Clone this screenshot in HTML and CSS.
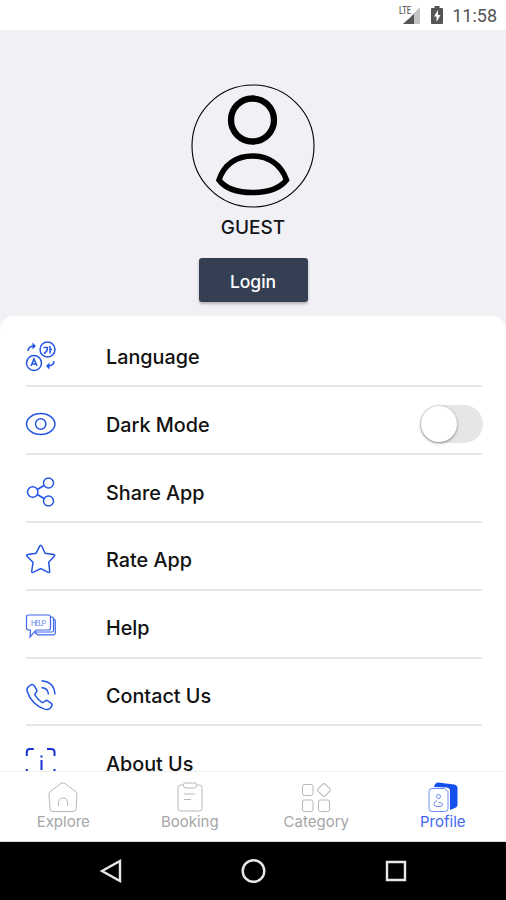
FILE: index.html
```html
<!DOCTYPE html>
<html lang="en">
  <head>
    <meta charset="UTF-8" />
    <meta name="viewport" content="width=device-width, initial-scale=1.0" />
    <title>Profile</title>
    <link rel="stylesheet" href="styles.css">
  </head>
  <body>
    <div class="status-bar">
      <svg class="signal" width="23" height="20" viewBox="0 0 23 20">
        <text x="1" y="8.500" class="lte" textLength="12" lengthAdjust="spacingAndGlyphs">LTE</text>
        <path d="M22 2v17H5l5-5h3v-3z" fill="#c3c3c3" />
        <path d="M16 9v10H5z" fill="#555" />
      </svg>
      <svg class="battery" width="12" height="18" viewBox="0 0 12 18">
        <path d="M3.500 0h5v2H11q1 0 1 1v14q0 1-1 1H1q-1 0-1-1V3q0-1 1-1h2.500z" fill="#555" />
        <path d="M7 4 3 10.500h2.500V16L9.500 9H7z" fill="#fff" />
      </svg>
      <span class="clock">11:58</span>
    </div>

    <header class="profile">
      <svg class="avatar" width="124" height="124" viewBox="0 0 124 124" fill="none" stroke="#000">
        <circle cx="62" cy="62" r="61" stroke-width="1.100" />
        <circle cx="61.500" cy="36" r="21.500" stroke-width="6.300" />
        <path d="M28 96C33 80 46 72 61.500 72S90 80 95.500 96C89 104 77 108.500 61.500 108.500S34 104 28 96Z" stroke-width="5.500" />
      </svg>
      <h1 class="guest">GUEST</h1>
      <button class="login">Login</button>
    </header>

    <main class="menu">
      <div class="row">
        <svg class="icon" viewBox="0 0 30 30">
          <circle cx="21.500" cy="8.500" r="7.500" />
          <path d="M17.500 6.500h4q0 4-3.500 6M24 5v7.500M24 8.500h2" />
          <circle cx="8" cy="22" r="7.500" />
          <path d="m5 25 3-7 3 7M6 23h4" />
          <path d="M2 10q0-5 7-5M28 20q0 5-7 5" />
          <path class="arrow" d="M6.500 1.500 10 5 6.500 8.500zM23.500 21.500 20 25l3.500 3.500z" />
        </svg>
        <span class="label">Language</span>
      </div>
      <div class="row">
        <svg class="icon" viewBox="0 0 30 30">
          <ellipse cx="14.700" cy="15" rx="14.200" ry="10.500" />
          <circle cx="14.700" cy="15" r="5.200" />
        </svg>
        <span class="label">Dark Mode</span>
        <span class="switch"><span class="knob"></span></span>
      </div>
      <div class="row">
        <svg class="icon" viewBox="0 0 30 30">
          <circle cx="6.700" cy="15" r="5.200" />
          <circle cx="22.500" cy="6" r="5" />
          <circle cx="22.500" cy="24" r="5" />
          <path d="m11.300 12.500 6.700-4M11.300 17.500l6.700 4" />
        </svg>
        <span class="label">Share App</span>
      </div>
      <div class="row">
        <svg class="icon" viewBox="0 0 30 30">
          <path d="M13.500 2.300q1.200-2.300 2.400 0l3.200 7 8.500 1.200q2 .5.500 2.100l-5.400 5.700 1 8.900q0 2-1.900 1l-7.100-3.500L7.600 28.200q-2 1-1.900-1l1.300-8.900-5.800-5.700q-1.500-1.600.6-2.100l8.300-1.200z" />
        </svg>
        <span class="label">Rate App</span>
      </div>
      <div class="row">
        <svg class="icon help-icon" viewBox="0 0 30 30">
          <path d="M2.500 3h20q2 0 2 2v11q0 2-2 2H10l-6 7 .5-7h-2q-2 0-2-2V5q0-2 2-2z" />
          <path d="M24.500 5h1.500q1.500 0 1.500 1.500v12q0 1.500-1.500 1.500H9M27.500 7q1.800 0 1.800 2v12q0 1.800-1.800 1.800H12l-3-2" />
          <text x="5" y="13.500" class="help-text" textLength="15">HELP</text>
        </svg>
        <span class="label">Help</span>
      </div>
      <div class="row">
        <svg class="icon" viewBox="0 0 30 30">
          <path d="M2.500 6.500 5 4.800q2-1 3.200.8l2.300 3.900q1 2-.8 3.500-1.400 1.200-.2 2.900 2.800 4 6.100 6.200 1.600 1 2.800-.5 1.500-1.900 3.300-.8l3.300 2.300q1.800 1.500.6 3.200l-1.500 1.900q-2 2-5.600.9C9.500 25.800 3.500 18.500 1.200 11.500q-.8-3 1.300-5z" />
          <path d="M15.500.8q12.700 1 13.500 13.700M15.500 7.500q6.700.8 7 7" />
        </svg>
        <span class="label">Contact Us</span>
      </div>
      <div class="row">
        <svg class="icon about-icon" viewBox="0 0 30 30">
          <path d="M.8 8V4q0-3 3-3h4M21 1h4q3.500 0 3.500 3v4M.8 21v4q0 3 3 3h4M21 28h4q3.500 0 3.500-3v-4M15.500 12v10M15.500 7.500v2" />
        </svg>
        <span class="label">About Us</span>
      </div>
    </main>

    <nav class="tabs">
      <a class="tab">
        <svg class="tab-icon" viewBox="0 0 30 30">
          <path d="M13 1.500q2-1.200 4 0l10 7.500q2 1.300 2 3.500l-.8 14q0 3-3 3H5q-3 0-3-3l-1-14Q1 10.300 3 9z" />
          <path d="M10.500 24v-3.500q0-4.500 4.500-4.500t4.500 4.500V24" />
        </svg>
        <span>Explore</span>
      </a>
      <a class="tab">
        <svg class="tab-icon" viewBox="0 0 30 30">
          <path d="M9 3H5.500Q3 3 3 5.500v21Q3 29 5.500 29h19q2.500 0 2.500-2.500v-21Q27 3 24.500 3H21" />
          <path d="M10 1h10q1.500 0 1.500 1.500v1Q21.500 6 19 6h-8Q8.500 6 8.500 3.500v-1Q8.500 1 10 1zM9 12h11M9 17.500h7" />
        </svg>
        <span>Booking</span>
      </a>
      <a class="tab">
        <svg class="tab-icon" viewBox="0 0 30 30">
          <rect x="1.500" y="2.500" width="10.500" height="11" rx="2" />
          <rect x="1.500" y="18" width="10.500" height="11.500" rx="2" />
          <rect x="17.500" y="18" width="11" height="11.500" rx="2" />
          <rect x="18" y="3" width="10" height="10" rx="2" transform="rotate(43 23 8)" />
        </svg>
        <span>Category</span>
      </a>
      <a class="tab active">
        <svg class="tab-icon" viewBox="0 0 30 30">
          <path class="back-card" d="M10 .5 26 2.500q3.500.5 3.500 3.500v17q0 2-2.500 3l-5 2V9q0-3-3-3.500L6 5q1-4.500 4-4.500z" />
          <path class="front-card" d="M4 6.500h12.500l3.500 3v17q0 3-2.500 3H4q-3 0-3-3v-17q0-3 3-3z" />
          <circle cx="10.500" cy="14.500" r="2" />
          <path d="M9 18.500q-3.500 1.500-3 4 .5 2 3 2h3q3-.5 2.500-2.500t-4-1.500" />
        </svg>
        <span>Profile</span>
      </a>
    </nav>

    <footer class="system-nav">
      <svg width="24" height="24" viewBox="0 0 24 24"><path d="M3 12 21 2v20z" /></svg>
      <svg width="26" height="26" viewBox="0 0 26 26"><circle cx="13.500" cy="13" r="10.800" /></svg>
      <svg width="24" height="24" viewBox="0 0 24 24"><path d="M4 3h18v18H4z" /></svg>
    </footer>
  </body>
</html>
```
FILE: styles.css
```css
* {
  box-sizing: border-box;
}

body {
  margin: 0;
  width: 506px;
  height: 900px;
  overflow: hidden;
  display: flex;
  flex-direction: column;
  background: #f0f0f5;
  font-family: "Inter", sans-serif;
}

.status-bar {
  height: 30px;
  flex: none;
  display: flex;
  justify-content: flex-end;
  align-items: center;
  padding: 1px 9px 0 0;
  background: #fff;
}

.lte {
  font: 500 10px "Roboto", sans-serif;
  fill: #666;
}

.signal {
  margin: 0 10px 2px 0;
}

.battery {
  margin: 0 9px 2px 0;
}

.clock {
  font: 18px "Roboto", sans-serif;
  color: #555;
}

.profile {
  height: 286px;
  flex: none;
  display: flex;
  flex-direction: column;
  align-items: center;
  padding-top: 54px;
}

.avatar {
  flex: none;
}

.guest {
  margin: 8px 0 0;
  height: 24px;
  line-height: 24px;
  font-size: 19px;
  font-weight: 500;
  color: #151518;
}

.login {
  margin-top: 18px;
  width: 109px;
  height: 44px;
  border: none;
  border-radius: 3px;
  background: #353f54;
  box-shadow: 0 2px 3px rgba(0, 0, 0, 0.25);
  color: #fff;
  font: 500 17.5px "Inter", sans-serif;
  padding: 2px 0 0;
}

.menu {
  height: 455px;
  flex: none;
  overflow: hidden;
  padding: 3.6px 24px 0 26px;
  border-radius: 14px 14px 0 0;
  background: #fff;
}

.row {
  height: 67.8px;
  display: flex;
  align-items: center;
  padding-top: 7px;
  border-bottom: 2px solid #e6e6e6;
}

.icon {
  width: 30px;
  height: 30px;
  margin-right: 50px;
  overflow: visible;
  fill: none;
  stroke: #2456e6;
  stroke-width: 1.5;
}

.arrow {
  fill: #2456e6;
  stroke: none;
}

.about-icon {
  stroke: #1733cf;
  stroke-width: 2;
}

.help-icon {
  stroke: #3d68ee;
  stroke-width: 1.2;
}

.help-text {
  font: 7px "Inter", sans-serif;
  fill: #5c7df0;
  stroke: none;
}

.label {
  padding-top: 2px;
  font-size: 19.8px;
  font-weight: 500;
  line-height: 24px;
  color: #111;
}

.switch {
  width: 63px;
  height: 38px;
  margin-left: auto;
  margin-right: -1px;
  border-radius: 19px;
  background: #e6e6e6;
}

.knob {
  display: block;
  width: 36px;
  height: 36px;
  margin: 1px;
  border-radius: 50%;
  background: #fff;
  box-shadow: 0 1px 3px rgba(0, 0, 0, 0.45);
}

.tabs {
  height: 71px;
  flex: none;
  display: grid;
  grid-template-columns: repeat(4, 1fr);
  background: #fff;
  border-top: 1px solid #f0f0f0;
  border-bottom: 1px solid #ddd;
}

.tab {
  display: flex;
  flex-direction: column;
  align-items: center;
  padding-top: 10px;
  color: #a6a6a6;
  font-size: 15px;
  line-height: 18px;
}

.tab-icon {
  width: 30px;
  height: 30px;
  margin-bottom: 1px;
  fill: none;
  stroke: #b8b8b8;
  stroke-width: 1;
}

.active {
  color: #4067f0;
}

.active .tab-icon {
  stroke: #6c8df5;
}

.active .back-card {
  fill: #1450ed;
  stroke: none;
}

.active .front-card {
  fill: #fff;
}

.system-nav {
  height: 58px;
  flex: none;
  display: flex;
  justify-content: center;
  align-items: center;
  gap: 117px;
  background: #000;
}

.system-nav svg {
  fill: none;
  stroke: #e8e8e8;
  stroke-width: 2.4;
}
```
